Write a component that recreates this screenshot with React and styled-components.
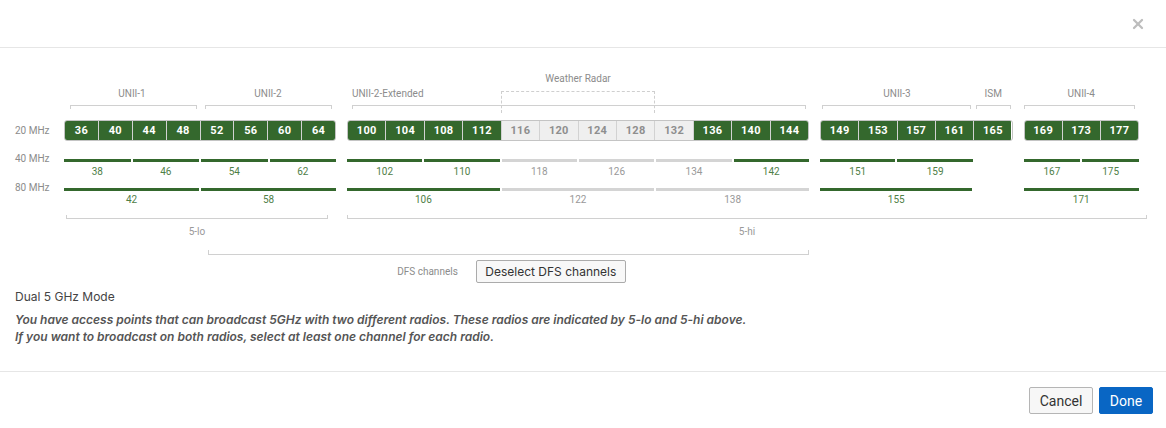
import React from 'react'
import styled, { createGlobalStyle, css } from 'styled-components'
import { X } from 'lucide-react'

const GREEN = '#34682d'
const GREEN_TEXT = '#4f8047'
const GREY_BAR = '#d4d4d4'
const LINE = '#d0d0d0'
const MUTED = '#8c8c8c'
const TEXT_FONT = 'Inter, Roboto, "Liberation Sans", sans-serif'

const BLOCKS = [
  { width: 34, channels: [36, 40, 44, 48, 52, 56, 60, 64] },
  { width: 38.5, channels: [100, 104, 108, 112, 116, 120, 124, 128, 132, 136, 140, 144] },
  { width: 38.5, channels: [149, 153, 157, 161, 165] },
  { width: 38.5, channels: [169, 173, 177] }
]

const DFS_OFF = [116, 120, 124, 128, 132]

// grid lines for every channel, gaps between blocks, tail for the 5-hi bracket
const LINES = {}
const TRACKS = ['49px']
let nextLine = 2
BLOCKS.forEach((block, i) => {
  if (i > 0) {
    TRACKS.push('11px')
    nextLine++
  }
  block.channels.forEach(ch => {
    LINES[ch] = nextLine++
    TRACKS.push(`${block.width}px`)
  })
})
TRACKS.push('8px')
const TAIL = nextLine + 1

const span = (from, to) => `${LINES[from]} / ${to === 'tail' ? TAIL : LINES[to] + 1}`

const RANGES = [
  { name: 'UNII-1', from: 36, to: 48, inset: [6, 3] },
  { name: 'UNII-2', from: 52, to: 64, inset: [5, 4] },
  { name: 'UNII-2-Extended', from: 100, to: 144, inset: [5, 3], left: true },
  { name: 'UNII-3', from: 149, to: 161, inset: [2, 3] },
  { name: 'ISM', from: 165, to: 165, inset: [2, 2] },
  { name: 'UNII-4', from: 169, to: 177, inset: [0, 4] }
]

const BARS_40 = [
  { from: 36, to: 64, bars: [[38, 1], [46, 1], [54, 1], [62, 1]] },
  { from: 100, to: 144, bars: [[102, 1], [110, 1], [118, 1, true], [126, 1, true], [134, 1, true], [142, 1]] },
  { from: 149, to: 165, bars: [[151, 2], [159, 2], [null, 1]] },
  { from: 169, to: 177, bars: [[167, 1], [175, 1]] }
]

const BARS_80 = [
  { from: 36, to: 64, bars: [[42, 1], [58, 1]] },
  { from: 100, to: 144, bars: [[106, 1], [122, 1, true], [138, 1, true]] },
  { from: 149, to: 165, bars: [[155, 4], [null, 1]] },
  { from: 169, to: 177, bars: [[171, 1]] }
]

const GlobalStyle = createGlobalStyle`
  body {
    margin: 0;
    background: #fff;
    font-family: Roboto, "Liberation Sans", sans-serif;
    color: #333;
  }
`

const Modal = styled.div`
  width: 1166px;
  height: 428px;
  display: flex;
  flex-direction: column;
  background: #fff;
`

const Header = styled.header`
  height: 47px;
  border-bottom: 1px solid #e6e6e6;
  display: flex;
  align-items: center;
  justify-content: flex-end;
  padding-right: 20px;
`

const CloseButton = styled.button`
  border: none;
  background: none;
  padding: 0;
  display: flex;
  color: #bdbdbd;
`

const Body = styled.main`
  height: 323px;
  box-sizing: border-box;
  padding: 24px 15px 0;
`

const place = css`
  grid-column: ${p => p.$col};
  grid-row: ${p => p.$row};
`

const Chart = styled.div`
  display: grid;
  grid-template-columns: ${TRACKS.join(' ')};
  grid-template-rows: 15px 14px 19px 21px 39px 29px 31px 15px 28px;
`

const BandLabel = styled.div`
  ${place}
  grid-column: 1;
  font-size: 10px;
  line-height: 14px;
  color: ${MUTED};
  margin-top: ${p => p.$top}px;
  align-self: ${p => (p.$center ? 'center' : 'start')};
`

const RangeTitle = styled.div`
  ${place}
  font-size: 10px;
  line-height: 14px;
  color: ${MUTED};
  white-space: nowrap;
  text-align: ${p => (p.$left ? 'left' : 'center')};
  padding-left: ${p => (p.$left ? 5 : 0)}px;
`

const RadarBox = styled.div`
  ${place}
  margin-top: 4px;
  height: 22px;
  border: 1px dashed #cfcfcf;
  border-bottom: none;
  box-sizing: border-box;
`

const Bracket = styled.div`
  ${place}
  box-sizing: border-box;
  height: ${p => p.$height}px;
  margin: ${p => p.$top}px ${p => p.$inset[1]}px 0 ${p => p.$inset[0]}px;
  border: 1px solid ${LINE};
  ${p => (p.$up ? 'border-top: none;' : 'border-bottom: none;')}
`

const ChannelBlock = styled.div`
  ${place}
  display: flex;
  border: 1px solid #c4c4c4;
  border-radius: 3px;
  overflow: hidden;
`

const Channel = styled.div`
  flex: 1;
  display: flex;
  align-items: center;
  justify-content: center;
  font-size: 11px;
  font-weight: 700;
  letter-spacing: 0.3px;
  background: ${p => (p.$off ? '#efefef' : GREEN)};
  color: ${p => (p.$off ? '#8e8e8e' : '#fff')};
  & + & {
    border-left: 1px solid #d2d2d2;
  }
`

const BarGroup = styled.div`
  ${place}
  display: flex;
  gap: 2px;
  padding-top: ${p => p.$top}px;
`

const BarSlot = styled.div`
  flex: ${p => p.$span};
  display: flex;
  flex-direction: column;
`

const Bar = styled.div`
  height: 3px;
  background: ${p => (p.$off ? GREY_BAR : GREEN)};
`

const BarLabel = styled.div`
  margin-top: ${p => p.$gap}px;
  font-size: 10px;
  line-height: 16px;
  text-align: center;
  color: ${p => (p.$off ? '#999' : GREEN_TEXT)};
`

const RadioTitle = styled.div`
  ${place}
  margin-top: 15px;
  padding-right: ${p => p.$shift || 0}px;
  font-size: 10px;
  line-height: 16px;
  text-align: center;
  color: #999;
`

const DfsRow = styled.div`
  ${place}
  margin-top: 5px;
  padding-left: 14px;
  display: flex;
  justify-content: center;
  align-items: center;
  gap: 18px;
`

const DfsLabel = styled.span`
  font-size: 10px;
  color: ${MUTED};
`

const DeselectButton = styled.button`
  height: 23px;
  width: 150px;
  border: 1px solid #ababab;
  border-radius: 2px;
  background: #f8f8f8;
  font-family: ${TEXT_FONT};
  font-size: 12px;
  color: #333;
  padding: 0;
`

const ModeTitle = styled.div`
  margin-top: 6px;
  font-family: ${TEXT_FONT};
  font-size: 12px;
  line-height: 16px;
  color: #444;
`

const ModeNote = styled.p`
  margin: 6px 0 0;
  font-family: ${TEXT_FONT};
  font-size: 12px;
  line-height: 17px;
  font-style: italic;
  font-weight: 600;
  color: #555;
`

const Footer = styled.footer`
  border-top: 1px solid #e6e6e6;
  display: flex;
  justify-content: flex-end;
  gap: 6px;
  padding: 15px 13px 0 0;
`

const FooterButton = styled.button`
  height: 27px;
  width: ${p => (p.$primary ? 54 : 64)}px;
  padding: 0;
  border-radius: 2px;
  font-family: inherit;
  font-size: 14px;
  border: 1px solid ${p => (p.$primary ? '#0966c4' : '#b5b5b5')};
  background: ${p => (p.$primary ? '#0966c4' : '#f7f7f7')};
  color: ${p => (p.$primary ? '#fff' : '#333')};
`

const BarRow = ({ groups, row, top, gap }) =>
  groups.map(g => (
    <BarGroup key={g.from} $col={span(g.from, g.to)} $row={row} $top={top}>
      {g.bars.map(([ch, weight, off], i) => (
        <BarSlot key={i} $span={weight}>
          {ch && (
            <>
              <Bar $off={off} />
              <BarLabel $off={off} $gap={gap}>{ch}</BarLabel>
            </>
          )}
        </BarSlot>
      ))}
    </BarGroup>
  ))

const ChannelChart = () => (
  <Chart>
    <RangeTitle $col={span(116, 128)} $row={1}>Weather Radar</RangeTitle>
    <RadarBox $col={span(116, 128)} $row="2 / 4" />

    {RANGES.map(r => (
      <React.Fragment key={r.name}>
        <RangeTitle $col={span(r.from, r.to)} $row={2} $left={r.left}>{r.name}</RangeTitle>
        <Bracket $col={span(r.from, r.to)} $row={3} $top={4} $height={4} $inset={r.inset} />
      </React.Fragment>
    ))}

    <BandLabel $row={4} $top={0} $center>20 MHz</BandLabel>
    {BLOCKS.map(b => (
      <ChannelBlock key={b.channels[0]} $col={span(b.channels[0], b.channels[b.channels.length - 1])} $row={4}>
        {b.channels.map(ch => (
          <Channel key={ch} $off={DFS_OFF.includes(ch)}>{ch}</Channel>
        ))}
      </ChannelBlock>
    ))}

    <BandLabel $row={5} $top={11}>40 MHz</BandLabel>
    <BarRow groups={BARS_40} row={5} top={18} gap={2} />

    <BandLabel $row={6} $top={1}>80 MHz</BandLabel>
    <BarRow groups={BARS_80} row={6} top={8} gap={1} />

    <Bracket $col={span(36, 64)} $row={7} $top={6} $height={4} $inset={[2, 8]} $up />
    <RadioTitle $col={span(36, 64)} $row={7} $shift={6}>5-lo</RadioTitle>
    <Bracket $col={span(100, 'tail')} $row={7} $top={6} $height={4} $inset={[0, 0]} $up />
    <RadioTitle $col={span(100, 'tail')} $row={7}>5-hi</RadioTitle>

    <Bracket $col={span(52, 144)} $row={8} $top={10} $height={5} $inset={[8, 0]} $up />
    <DfsRow $col={span(52, 144)} $row={9}>
      <DfsLabel>DFS channels</DfsLabel>
      <DeselectButton>Deselect DFS channels</DeselectButton>
    </DfsRow>
  </Chart>
)

export default function App() {
  return (
    <Modal>
      <GlobalStyle />
      <Header>
        <CloseButton aria-label="Close">
          <X size={16} strokeWidth={3.4} />
        </CloseButton>
      </Header>
      <Body>
        <ChannelChart />
        <ModeTitle>Dual 5 GHz Mode</ModeTitle>
        <ModeNote>
          You have access points that can broadcast 5GHz with two different radios. These radios are indicated by 5-lo and 5-hi above.
          <br />
          If you want to broadcast on both radios, select at least one channel for each radio.
        </ModeNote>
      </Body>
      <Footer>
        <FooterButton>Cancel</FooterButton>
        <FooterButton $primary>Done</FooterButton>
      </Footer>
    </Modal>
  )
}
